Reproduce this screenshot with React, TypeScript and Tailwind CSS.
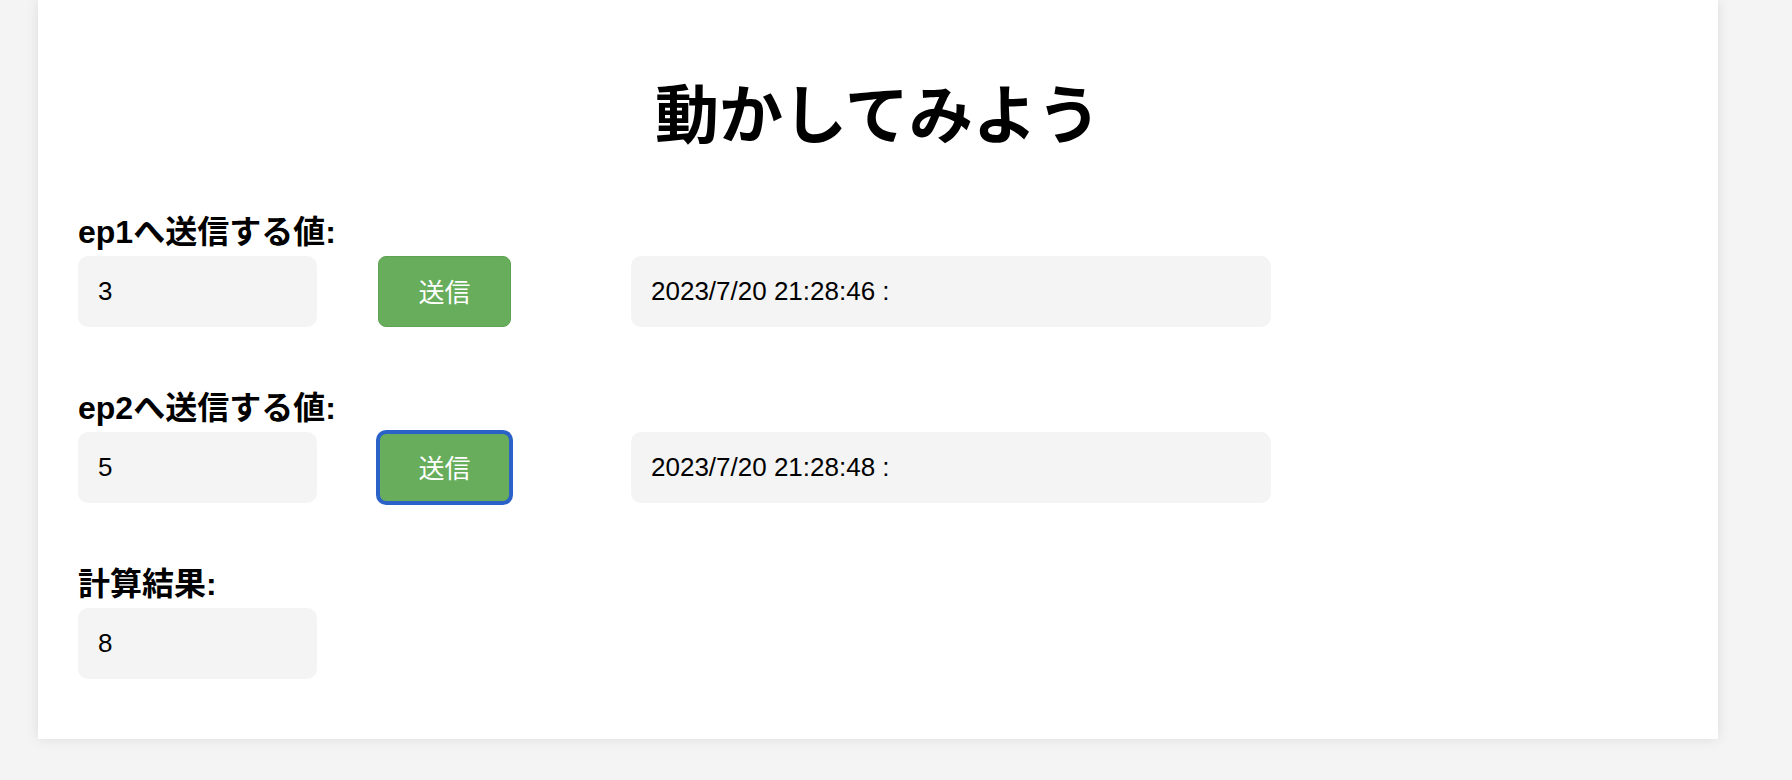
import React from "react";

const font = { fontFamily: '"Liberation Sans", "Noto Sans CJK JP", sans-serif' };

function Field({ value }: { value: string }) {
  return (
    <input
      readOnly
      value={value}
      className="w-[239px] h-[71px] rounded-[10px] bg-[#f4f4f4] px-[20px] text-[26px] text-black outline-none border-0"
      style={font}
    />
  );
}

function SendButton({ focused }: { focused?: boolean }) {
  return (
    <button
      className={
        focused
          ? "ml-[61px] w-[133px] h-[71px] pt-[4px] rounded-[8px] bg-[#68ad5b] text-white text-[26px] outline-4 outline-solid outline-[#2a62c8] -outline-offset-2"
          : "ml-[61px] w-[133px] h-[71px] pt-[4px] rounded-[8px] bg-[#68ad5b] border border-[#5fa352] text-white text-[26px]"
      }
      style={font}
    >
      送信
    </button>
  );
}

function Stamp({ text }: { text: string }) {
  return (
    <div className="ml-[120px] w-[640px] h-[71px] rounded-[10px] bg-[#f4f4f4] pl-[20px] flex items-center text-[26px] text-black">
      {text}
    </div>
  );
}

function Label({ children }: { children: React.ReactNode }) {
  return <div className="text-[32px] leading-[38px] font-bold text-black">{children}</div>;
}

export default function App() {
  return (
    <div className="min-h-screen bg-[#f4f4f4]" style={font}>
      <div className="ml-[38px] w-[1680px] bg-white shadow-[0_0_12px_rgba(0,0,0,0.1)] pt-[78px] pb-[60px] pl-[40px]">
        <h1 className="text-center text-[64px] leading-[76px] font-bold text-black -ml-[40px]">動かしてみよう</h1>

        <div className="mt-[59px]">
          <Label>ep1へ送信する値:</Label>
          <div className="mt-[5px] flex items-center">
            <Field value="3" />
            <SendButton />
            <Stamp text="2023/7/20 21:28:46 :" />
          </div>
        </div>

        <div className="mt-[62px]">
          <Label>ep2へ送信する値:</Label>
          <div className="mt-[5px] flex items-center">
            <Field value="5" />
            <SendButton focused />
            <Stamp text="2023/7/20 21:28:48 :" />
          </div>
        </div>

        <div className="mt-[62px]">
          <Label>計算結果:</Label>
          <div className="mt-[5px] flex items-center">
            <Field value="8" />
          </div>
        </div>
      </div>
    </div>
  );
}
